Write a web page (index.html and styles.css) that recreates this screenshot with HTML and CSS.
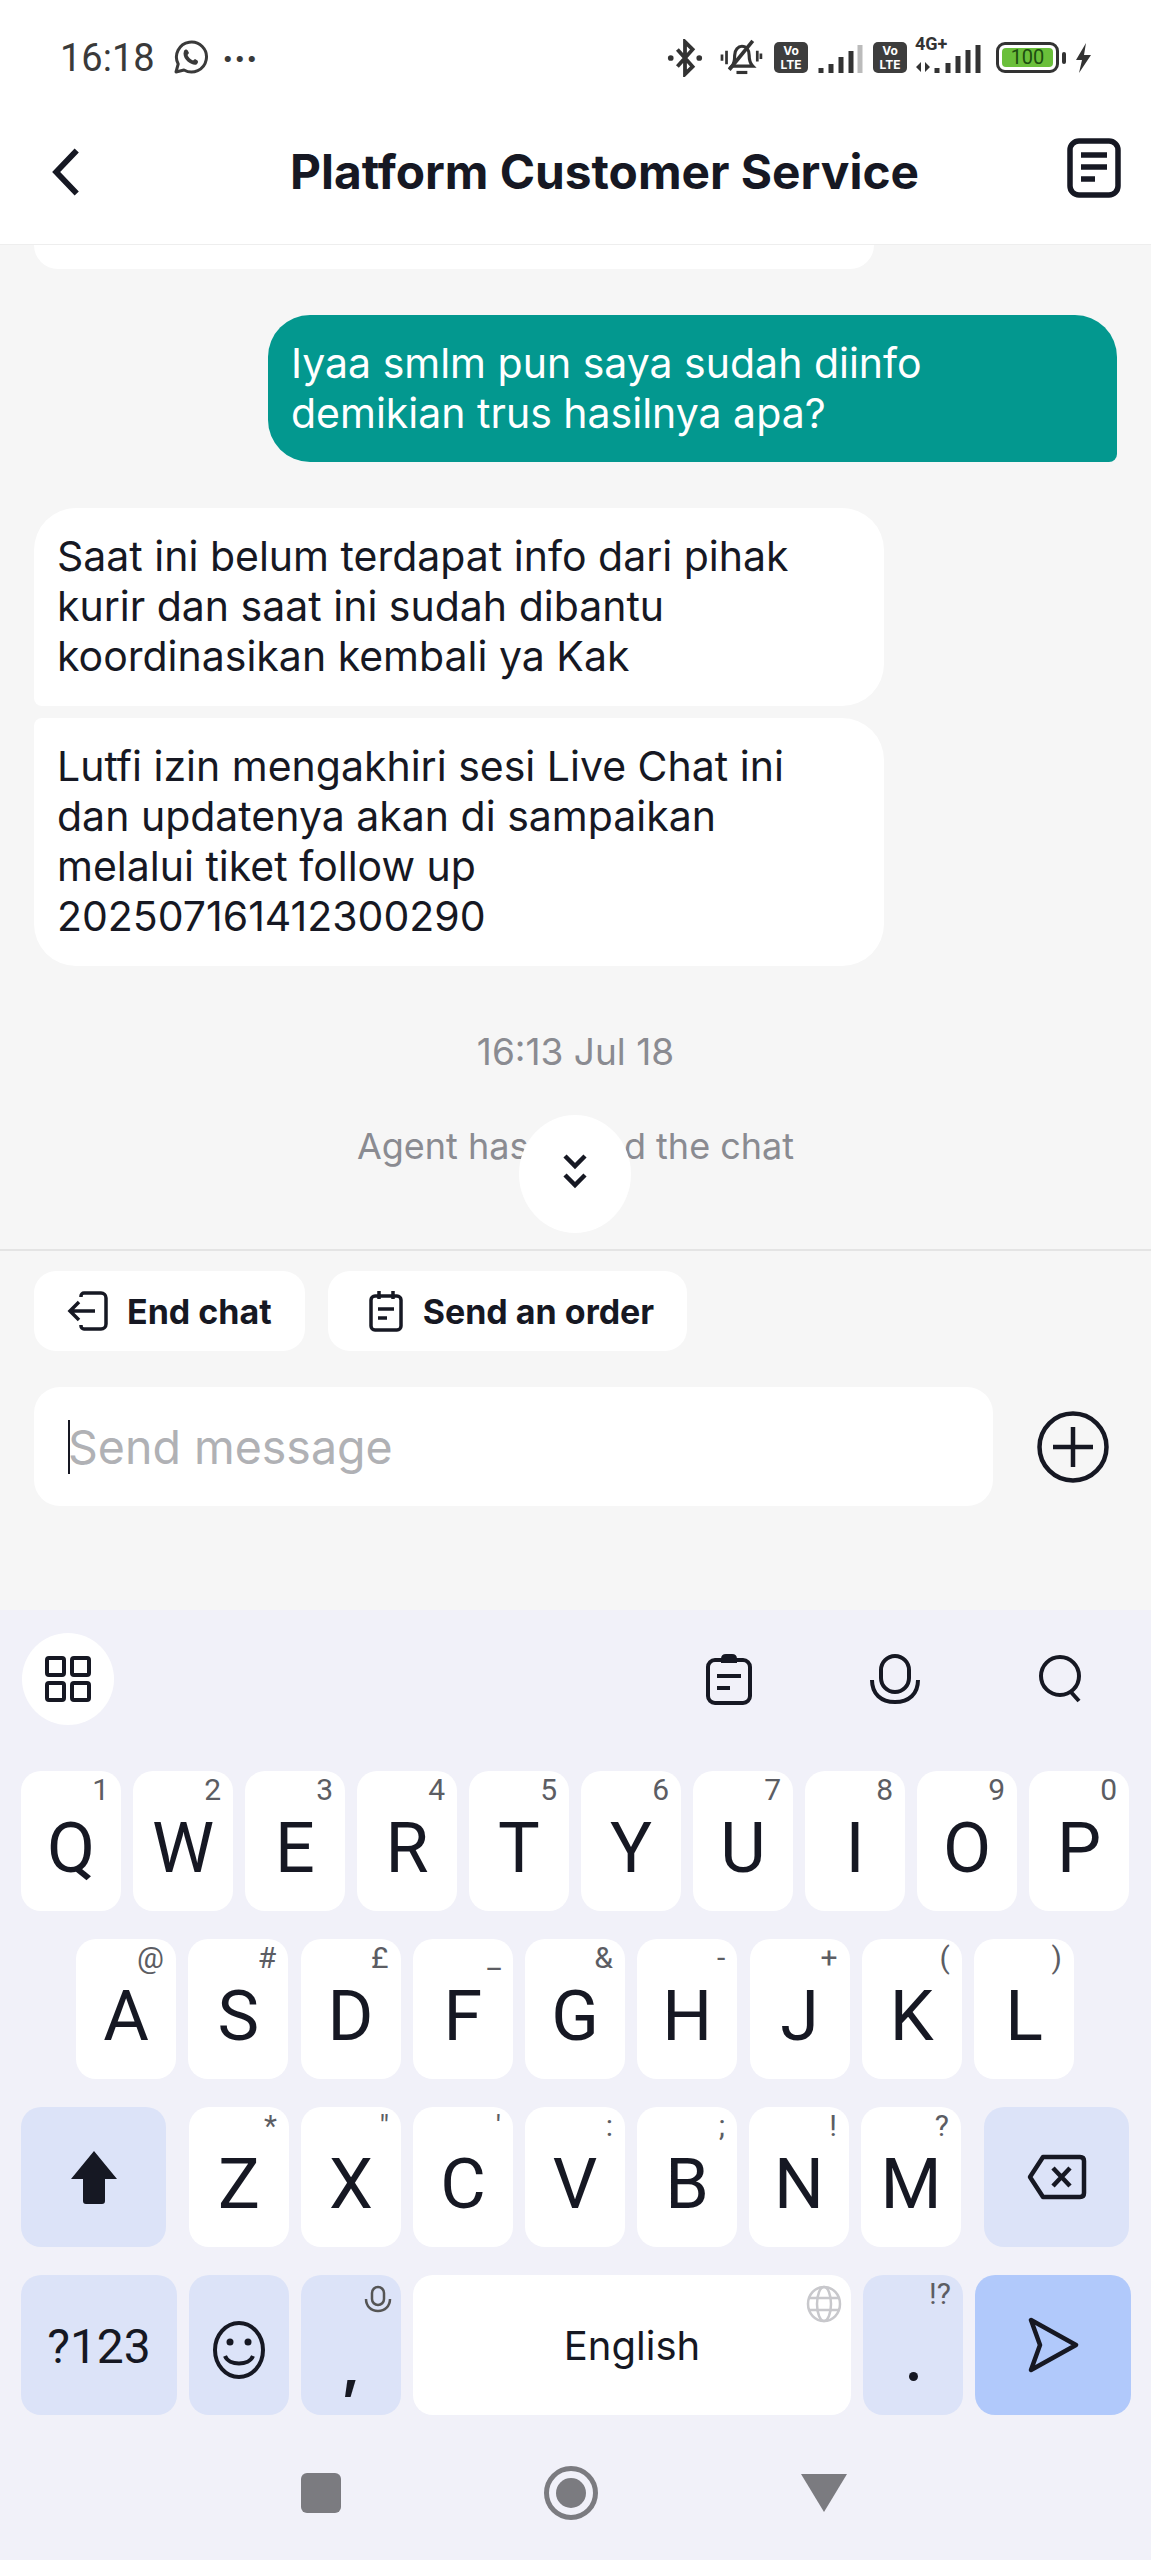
FILE: index.html
```html
<!DOCTYPE html>
<html lang="en">
<head>
    <meta charset="UTF-8">
    <title>Platform Customer Service</title>
    <link rel="stylesheet" href="styles.css">
</head>
<body>
    <div class="phone">
        <!-- status bar -->
        <div class="status">
            <span class="clock">16:18</span>
            <svg class="wa" viewBox="0 0 36 36" width="36" height="36"><path d="M4 32l2.2-8A15 15 0 1 1 12 30z" fill="none" stroke="#3a3a3a" stroke-width="3" stroke-linejoin="round"/><path d="M12 11c1-2 3-2 4 0l1 2-1.500 2c1 2.500 3 4.500 5.500 5.500l2-1.500 2.500 1.500c1 1 .5 3-1 4-4 1.500-13-4-13-11z" fill="#3a3a3a"/></svg>
            <span class="dots">···</span>
            <span class="status-right">
                <svg viewBox="0 0 36 40" width="36" height="38"><path d="M10 11l16 18-8 8V3l8 8-16 18" fill="none" stroke="#333" stroke-width="4"/><circle cx="3" cy="20" r="3" fill="#333"/><circle cx="33" cy="20" r="3" fill="#333"/></svg>
                <svg class="bell" viewBox="0 0 48 42" width="46" height="38"><path d="M14 30c3-3 3-7 3-12 0-6 4-10 8-10 5 0 8 4 8 10 0 6 1 9 4 12z" fill="none" stroke="#333" stroke-width="3.500"/><path d="M37 2L11 34" stroke="#333" stroke-width="4"/><path d="M19 37h12" stroke="#333" stroke-width="3.500"/><path d="M3 17v7M8 13v15M42 13v12M46 16v6" stroke="#333" stroke-width="3"/></svg>
                <span class="volte">Vo<br>LTE</span>
                <svg viewBox="0 0 45 30" width="45" height="30"><path d="M3 25v5M13 21v9M23 14v16M33 8v22" stroke="#333" stroke-width="5"/><path d="M42 2v28" stroke="#bbb" stroke-width="5"/></svg>
                <span class="volte">Vo<br>LTE</span>
                <span class="net"><span class="net-label">4G+</span>
                    <svg viewBox="0 0 66 30" width="66" height="30"><path d="M6 19l-5 5 5 5zM10 19v10l5-5z" fill="#333"/><path d="M22 25v5M33 20v10M43 13v17M53 7v23M63 2v28" stroke="#333" stroke-width="5"/></svg>
                </span>
                <span class="battery"><span class="battery-fill">100</span></span>
                <span class="battery-tip"></span>
                <svg viewBox="0 0 15 30" width="15" height="30"><path d="M10 0L0 17h6L3 30l12-18H8z" fill="#333"/></svg>
            </span>
        </div>

        <!-- title -->
        <div class="nav">
            <svg viewBox="0 0 32 56" width="32" height="50"><path d="M28 4L5 28l23 24" fill="none" stroke="#161823" stroke-width="6.500"/></svg>
            <div class="nav-title">Platform Customer Service</div>
            <svg class="nav-doc" viewBox="0 0 54 60" width="54" height="62"><rect x="3" y="3" width="48" height="54" rx="9" fill="none" stroke="#161823" stroke-width="5.500"/><path d="M14 17h26M14 29h26M14 41h14" stroke="#161823" stroke-width="5.500"/></svg>
        </div>

        <!-- messages -->
        <div class="chat">
            <div class="bubble-cut"></div>
            <div class="bubble mine">Iyaa smlm pun saya sudah diinfo<br>demikian trus hasilnya apa?</div>
            <div class="bubble theirs">Saat ini belum terdapat info dari pihak<br>kurir dan saat ini sudah dibantu<br>koordinasikan kembali ya Kak</div>
            <div class="bubble theirs second">Lutfi izin mengakhiri sesi Live Chat ini<br>dan updatenya akan di sampaikan<br>melalui tiket follow up<br>202507161412300290</div>
            <div class="chat-time">16:13 Jul 18</div>
            <div class="chat-note">Agent has ended the chat</div>
            <div class="scroll-down">
                <svg viewBox="0 0 28 36" width="28" height="36"><path d="M4 3l10 10L24 3M4 22l10 10 10-10" fill="none" stroke="#161823" stroke-width="4.500"/></svg>
            </div>
        </div>

        <!-- actions and input -->
        <div class="compose">
            <div class="chips">
                <div class="chip">
                    <svg viewBox="0 0 42 40" width="42" height="40"><path d="M14 6V5a3 3 0 0 1 3-3h17a5 5 0 0 1 5 5v26a5 5 0 0 1-5 5H17a3 3 0 0 1-3-3v-1" fill="none" stroke="#161823" stroke-width="3.500"/><path d="M28 20H4M12 11l-9 9 9 9" fill="none" stroke="#161823" stroke-width="3.500"/></svg>
                    End chat
                </div>
                <div class="chip order">
                    <svg viewBox="0 0 34 42" width="34" height="42"><rect x="2" y="6" width="30" height="34" rx="4" fill="none" stroke="#161823" stroke-width="3.500"/><path d="M10 1v8M24 1v8M9 19h16M9 28h9" stroke="#161823" stroke-width="3.500"/></svg>
                    Send an order
                </div>
            </div>
            <div class="input-row">
                <div class="input"><span class="caret"></span>Send message</div>
                <svg viewBox="0 0 72 72" width="72" height="72"><circle cx="36" cy="36" r="33.500" fill="none" stroke="#161823" stroke-width="4.500"/><path d="M36 16v40M16 36h40" stroke="#161823" stroke-width="4.500"/></svg>
            </div>
        </div>

        <!-- keyboard -->
        <div class="keyboard">
            <div class="kb-tools">
                <div class="kb-grid">
                    <svg viewBox="0 0 46 46" width="46" height="46"><g fill="none" stroke="#161823" stroke-width="4"><rect x="2" y="2" width="17" height="17" rx="2"/><rect x="27" y="2" width="17" height="17" rx="2"/><rect x="2" y="27" width="17" height="17" rx="2"/><rect x="27" y="27" width="17" height="17" rx="2"/></g></svg>
                </div>
                <svg class="kb-clip" viewBox="0 0 48 54" width="48" height="54"><rect x="3" y="8" width="42" height="43" rx="7" fill="none" stroke="#161823" stroke-width="4"/><path d="M17 10V7q0-4 4-4h6q4 0 4 4v3z" fill="#161823" stroke="#161823" stroke-width="2"/><path d="M12 24h24M12 36h13" stroke="#161823" stroke-width="4"/></svg>
                <svg class="kb-mic" viewBox="0 0 50 50" width="50" height="50"><rect x="11" y="2" width="28" height="36" rx="14" fill="none" stroke="#161823" stroke-width="4"/><path d="M2 26c0 14 9 22 23 22s23-8 23-22" fill="none" stroke="#161823" stroke-width="4"/></svg>
                <svg class="kb-search" viewBox="0 0 46 48" width="46" height="48"><circle cx="22" cy="21" r="19" fill="none" stroke="#161823" stroke-width="4"/><path d="M32 36l9 10" stroke="#161823" stroke-width="4"/></svg>
            </div>

            <div class="kb-row">
                <div class="key"><sup>1</sup>Q</div>
                <div class="key"><sup>2</sup>W</div>
                <div class="key"><sup>3</sup>E</div>
                <div class="key"><sup>4</sup>R</div>
                <div class="key"><sup>5</sup>T</div>
                <div class="key"><sup>6</sup>Y</div>
                <div class="key"><sup>7</sup>U</div>
                <div class="key"><sup>8</sup>I</div>
                <div class="key"><sup>9</sup>O</div>
                <div class="key"><sup>0</sup>P</div>
            </div>
            <div class="kb-row indent">
                <div class="key"><sup>@</sup>A</div>
                <div class="key"><sup>#</sup>S</div>
                <div class="key"><sup>£</sup>D</div>
                <div class="key"><sup>_</sup>F</div>
                <div class="key"><sup>&amp;</sup>G</div>
                <div class="key"><sup>-</sup>H</div>
                <div class="key"><sup>+</sup>J</div>
                <div class="key"><sup>(</sup>K</div>
                <div class="key"><sup>)</sup>L</div>
            </div>
            <div class="kb-row row-three">
                <div class="key fn shift">
                    <svg viewBox="0 0 50 56" width="50" height="56"><path d="M25 2L48 30H36v22q0 3-3 3H17q-3 0-3-3V30H2z" fill="#161823"/></svg>
                </div>
                <div class="key"><sup>*</sup>Z</div>
                <div class="key"><sup>"</sup>X</div>
                <div class="key"><sup>'</sup>C</div>
                <div class="key"><sup>:</sup>V</div>
                <div class="key"><sup>;</sup>B</div>
                <div class="key"><sup>!</sup>N</div>
                <div class="key"><sup>?</sup>M</div>
                <div class="key fn shift">
                    <svg viewBox="0 0 60 46" width="60" height="46"><path d="M16 3h37q4 0 4 4v32q0 4-4 4H16L3 23z" fill="none" stroke="#161823" stroke-width="4.500" stroke-linejoin="round"/><path d="M26 14l17 18M43 14L26 32" stroke="#161823" stroke-width="4.500"/></svg>
                </div>
            </div>
            <div class="kb-row row-four">
                <div class="key fn wide small">?123</div>
                <div class="key fn emoji">
                    <svg viewBox="0 0 54 60" width="54" height="60"><ellipse cx="27" cy="30" rx="24" ry="27" fill="none" stroke="#161823" stroke-width="4"/><circle cx="18" cy="22" r="3.500" fill="#161823"/><circle cx="36" cy="22" r="3.500" fill="#161823"/><path d="M13 36c4 10 24 10 28 0" fill="none" stroke="#161823" stroke-width="4"/></svg>
                </div>
                <div class="key fn">
                    <svg class="key-mic" viewBox="0 0 28 28" width="28" height="28"><rect x="8" y="2" width="12" height="18" rx="6" fill="none" stroke="#555" stroke-width="2.500"/><path d="M2 14c0 7 5 12 12 12s12-5 12-12" fill="none" stroke="#555" stroke-width="2.500"/></svg>
                    <span class="comma">,</span>
                </div>
                <div class="key space">
                    <svg class="key-globe" viewBox="0 0 36 38" width="36" height="38"><g fill="none" stroke="#c8c8cc" stroke-width="2.500"><ellipse cx="18" cy="19" rx="16" ry="17"/><ellipse cx="18" cy="19" rx="7" ry="17"/><path d="M3 13h30M3 25h30"/></g></svg>
                    English
                </div>
                <div class="key fn"><sup>!?</sup><span class="period"></span></div>
                <div class="key wide send">
                    <svg viewBox="0 0 52 56" width="52" height="56"><path d="M4 3l45 25L4 53l9-25z" fill="none" stroke="#161823" stroke-width="4.500" stroke-linejoin="round"/></svg>
                </div>
            </div>

            <!-- android nav -->
            <div class="sys-nav">
                <span class="sys-square"></span>
                <span class="sys-circle"><span></span></span>
                <span class="sys-back"></span>
            </div>
        </div>
    </div>
</body>
</html>
```

FILE: styles.css
```css
body {
    margin: 0;
    background: #fff;
}

.phone {
    width: 1151px;
    height: 2560px;
    display: flex;
    flex-direction: column;
    overflow: hidden;
    font-family: Inter, "Liberation Sans", sans-serif;
    color: #161823;
}

/* status bar */
.status {
    height: 115px;
    box-sizing: border-box;
    padding: 0 60px;
    display: flex;
    align-items: center;
    color: #3a3a3a;
}

.clock {
    font-family: Roboto, sans-serif;
    font-size: 38px;
    font-weight: 400;
}

.wa {
    margin-left: 17px;
}

.dots {
    margin-left: 14px;
    font-size: 36px;
    font-weight: 700;
    line-height: 1;
}

.status-right {
    margin-left: auto;
    display: flex;
    align-items: center;
    gap: 10px;
}

.bell {
    margin-left: 5px;
}

.volte {
    width: 34px;
    height: 31px;
    box-sizing: border-box;
    padding-top: 2px;
    border-radius: 5px;
    background: #3d3d3d;
    color: #fff;
    font-size: 12px;
    font-weight: 700;
    line-height: 14px;
    text-align: center;
}

.net {
    position: relative;
    display: block;
    width: 66px;
    height: 30px;
    margin-left: -2px;
}

.net svg {
    display: block;
}

.net-label {
    position: absolute;
    left: 0;
    top: -9px;
    font-family: Roboto, sans-serif;
    font-size: 18px;
    font-weight: 700;
    line-height: 20px;
    color: #333;
}

.battery {
    width: 63px;
    height: 31px;
    box-sizing: border-box;
    padding: 3px;
    border: 3px solid #333;
    border-radius: 9px;
    margin-left: 5px;
}

.battery-fill {
    display: block;
    height: 100%;
    border-radius: 4px;
    background: #6abf3a;
    color: #1d4d10;
    font-family: Roboto, sans-serif;
    font-size: 20px;
    line-height: 19px;
    text-align: center;
}

.battery-tip {
    width: 4px;
    height: 12px;
    margin-left: -7px;
    background: #333;
    border-radius: 2px;
}

/* title */
.nav {
    height: 130px;
    box-sizing: border-box;
    padding: 0 30px 16px 50px;
    display: flex;
    align-items: center;
    border-bottom: 1px solid #eee;
}

.nav-title {
    margin-left: 208px;
    font-size: 47.8px;
    font-weight: 700;
}

.nav-doc {
    margin: -8px 0 0 auto;
}

/* chat */
.chat {
    position: relative;
    height: 1006px;
    box-sizing: border-box;
    background: #f6f6f6;
    display: flex;
    flex-direction: column;
    align-items: flex-start;
    padding: 0 34px;
    border-bottom: 2px solid #e4e4e4;
}

.bubble-cut {
    width: 840px;
    height: 24px;
    background: #fff;
    border-radius: 0 0 42px 42px;
}

.bubble {
    box-sizing: border-box;
    font-size: 41px;
    line-height: 50px;
    padding: 23px;
}

.mine {
    align-self: flex-end;
    width: 849px;
    height: 147px;
    margin-top: 46px;
    background: #03988f;
    color: #fff;
    border-radius: 42px 42px 8px 42px;
}

.theirs {
    width: 850px;
    height: 198px;
    margin-top: 46px;
    background: #fff;
    border-radius: 42px 42px 42px 8px;
}

.theirs.second {
    height: 248px;
    margin-top: 12px;
    border-radius: 8px 42px 42px 42px;
}

.chat-time,
.chat-note {
    align-self: center;
    color: #8a8b91;
    font-size: 37px;
    line-height: 46px;
}

.chat-time {
    margin-top: 63px;
}

.chat-note {
    margin-top: 48px;
    font-size: 36px;
}

.scroll-down {
    position: absolute;
    left: 519px;
    top: 870px;
    width: 112px;
    height: 118px;
    border-radius: 50%;
    background: #fff;
    display: flex;
    align-items: center;
    justify-content: center;
    padding-bottom: 6px;
    box-sizing: border-box;
}

/* actions + input */
.compose {
    height: 359px;
    box-sizing: border-box;
    background: #f6f6f6;
    padding: 20px 34px 0;
}

.chips {
    display: flex;
    gap: 23px;
}

.chip {
    height: 80px;
    box-sizing: border-box;
    padding: 0 33px;
    background: #fff;
    border-radius: 22px;
    display: flex;
    align-items: center;
    gap: 18px;
    font-size: 34px;
    font-weight: 700;
}

.chip.order {
    padding-left: 41px;
    gap: 20px;
}

.input-row {
    display: flex;
    align-items: center;
    justify-content: space-between;
    margin-top: 36px;
    padding-right: 8px;
}

.input {
    width: 959px;
    height: 119px;
    box-sizing: border-box;
    padding-left: 34px;
    background: #fff;
    border-radius: 26px;
    display: flex;
    align-items: center;
    color: #b0b1b5;
    font-size: 46.5px;
}

.caret {
    width: 2px;
    height: 54px;
    margin-right: -2px;
    background: #161823;
}

/* keyboard */
.keyboard {
    flex: 1;
    background: #f1f1f9;
    padding: 0 21px;
}

.kb-tools {
    height: 161px;
    box-sizing: border-box;
    padding-bottom: 23px;
    display: flex;
    align-items: center;
}

.kb-grid {
    width: 92px;
    height: 92px;
    margin-left: 1px;
    border-radius: 50%;
    background: #fff;
    display: flex;
    align-items: center;
    justify-content: center;
}

.kb-clip {
    margin-left: 591px;
}

.kb-mic {
    margin-left: 117px;
}

.kb-search {
    margin-left: 118px;
}

.kb-row {
    display: flex;
    gap: 12px;
    margin-bottom: 28px;
}

.kb-row.indent {
    padding-left: 55px;
    gap: 12.25px;
}

.key {
    position: relative;
    width: 100px;
    height: 140px;
    flex: none;
    box-sizing: border-box;
    background: #fff;
    border-radius: 20px;
    display: flex;
    align-items: center;
    justify-content: center;
    padding-top: 14px;
    font-family: Roboto, sans-serif;
    font-size: 70px;
    color: #161823;
}

.key sup {
    position: absolute;
    right: 12px;
    top: 1px;
    font-size: 30px;
    line-height: 36px;
    color: #5c5d63;
}

.key.fn {
    background: #dce3f8;
}

.key.shift {
    width: 145px;
    padding-top: 0;
}

.row-three .key.shift:first-child {
    margin-right: 11px;
}

.row-three .key.shift:last-child {
    margin-left: 11px;
}

.key.wide {
    width: 156px;
    padding-top: 0;
}

.key.small {
    padding-top: 3px;
    font-size: 48px;
}

.key.emoji {
    padding-top: 10px;
}

.key.space {
    width: 438px;
    padding-top: 0;
    font-family: Inter, sans-serif;
    font-size: 40px;
}

.key.send {
    background: #b1c9fb;
}

.key-mic {
    position: absolute;
    right: 9px;
    top: 10px;
}

.key-globe {
    position: absolute;
    right: 9px;
    top: 10px;
}

.comma {
    margin-top: 28px;
    font-family: Inter, sans-serif;
    font-size: 56px;
    font-weight: 700;
    line-height: 1;
}

.period {
    width: 9px;
    height: 9px;
    margin-top: 48px;
    border-radius: 50%;
    background: #161823;
}

.sys-nav {
    display: flex;
    align-items: center;
    gap: 203px;
    height: 100px;
    padding-left: 280px;
}

.sys-square {
    width: 40px;
    height: 40px;
    border-radius: 6px;
    background: #7b7b80;
}

.sys-circle {
    width: 44px;
    height: 44px;
    border: 5px solid #7b7b80;
    border-radius: 50%;
    display: flex;
    align-items: center;
    justify-content: center;
}

.sys-circle span {
    width: 30px;
    height: 30px;
    border-radius: 50%;
    background: #7b7b80;
}

.sys-back {
    width: 0;
    height: 0;
    border-left: 23px solid transparent;
    border-right: 23px solid transparent;
    border-top: 38px solid #7b7b80;
}
```
